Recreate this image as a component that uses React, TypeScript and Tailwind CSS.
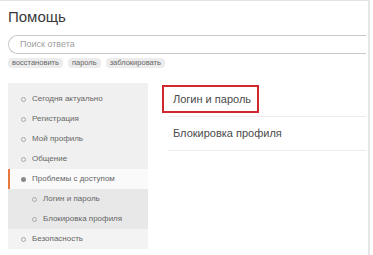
import React from 'react';

const topics = ['Сегодня актуально', 'Регистрация', 'Мой профиль', 'Общение'];
const tags = ['восстановить', 'пароль', 'заблокировать'];

const Bullet = ({ filled }: { filled?: boolean }) => (
    <span
        className={
            filled
                ? "h-[5px] w-[5px] shrink-0 rounded-full bg-[#8a8a8a]"
                : "h-[5px] w-[5px] shrink-0 rounded-full border border-[#a8a8a8]"
        }
    />
);

const SideRow = ({ label, sub, filled }: { label: string; sub?: boolean; filled?: boolean }) => (
    <div className={sub ? "flex h-[20px] items-center gap-[6px] pl-[24px]" : "flex h-[20px] items-center gap-[6px] pl-[13px]"}>
        <Bullet filled={filled} />
        <span>{label}</span>
    </div>
);

const App = () => {
    return (
        <div
            className="h-[255px] w-[370px] overflow-hidden border-t border-r-2 border-t-[#e3e3e3] border-r-[#e6e6e6] bg-white pl-[8px] pr-[2px]"
            style={{ fontFamily: '"Liberation Sans", Arial, sans-serif' }}
        >
            <h1 className="mt-[8px] text-[15px] leading-[15px] text-[#3a3a3a]">Помощь</h1>

            <div className="mt-[11px] flex h-[19px] items-center rounded-l-full border-y border-l border-[#c9c9c9] pl-[11px] text-[9px] text-[#a0a0a0]">
                Поиск ответа
            </div>

            <div className="mt-[4px] flex gap-[5px]">
                {tags.map((tag) => (
                    <span key={tag} className="flex h-[10px] items-center rounded-[4px] bg-[#ececec] px-[4px] text-[7.5px] text-[#666]">
                        {tag}
                    </span>
                ))}
            </div>

            <div className="mt-[15px] flex">
                <nav className="w-[140px] shrink-0 bg-[#f0f0f0] pt-[6px] text-[8px] text-[#666]">
                    {topics.map((t) => (
                        <SideRow key={t} label={t} />
                    ))}
                    <div className="border-l-2 border-[#e8793e] bg-[#fafafa]">
                        <div className="-ml-[2px]">
                            <SideRow label="Проблемы с доступом" filled />
                        </div>
                    </div>
                    <div className="bg-[#e8e8e8]">
                        <SideRow label="Логин и пароль" sub />
                        <SideRow label="Блокировка профиля" sub />
                    </div>
                    <div className="bg-[#f3f3f3]">
                        <SideRow label="Безопасность" />
                    </div>
                </nav>

                <div className="ml-[14px] flex-1 text-[11px] text-[#4a4a4a]">
                    <div className="pt-[2px] pb-[3px]">
                        <div className="flex h-[28px] w-[97px] items-center border-2 border-[#d1272e] pl-[9px]">
                            Логин и пароль
                        </div>
                    </div>
                    <div className="ml-[6px] border-b border-[#ececec]" />
                    <div className="pt-[2px] pb-[3px]">
                        <div className="flex h-[28px] items-center border-2 border-transparent pl-[9px]">
                            Блокировка профиля
                        </div>
                    </div>
                    <div className="ml-[6px] border-b border-[#ececec]" />
                </div>
            </div>
        </div>
    );
};

export default App;
